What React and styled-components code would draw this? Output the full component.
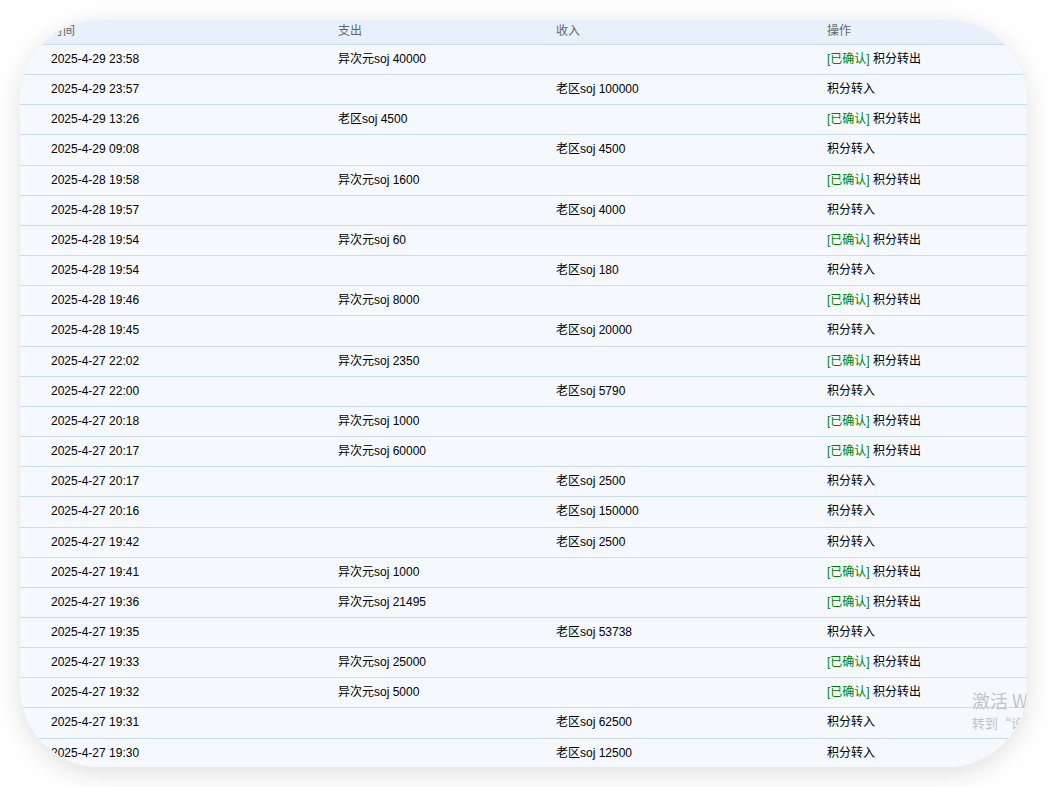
import React from 'react';
import styled, { createGlobalStyle } from 'styled-components';

const GlobalStyle = createGlobalStyle`
   html, body {
      margin: 0;
      padding: 0;
      background: #ffffff;
   }
   body {
      font-family: 'Liberation Sans', Arial, 'Noto Sans CJK SC', sans-serif;
      font-size: 12px;
      color: #000;
   }
`;

const Page = styled.div`
   padding: 20px;
   width: 1007px;
`;

const Card = styled.div`
   position: relative;
   width: 1007px;
   height: 747px;
   border-radius: 80px;
   overflow: hidden;
   background: #f5f9fe;
   box-shadow: 0 6px 28px rgba(0, 0, 0, 0.13);
`;

const Row = styled.div`
   display: grid;
   grid-template-columns: 287px 218px 271px 1fr;
   box-sizing: border-box;
   height: ${(p) => (p.$head ? '25px' : '30.16px')};
   padding: ${(p) => (p.$head ? '1px' : '4px')} 0 0 31px;
   line-height: 20px;
   border-bottom: 1px solid #c9dbee;
   background: ${(p) => (p.$head ? '#e7f0fb' : '#f5f9fe')};
   color: ${(p) => (p.$head ? '#666' : '#000')};
   white-space: nowrap;
`;

const Cell = styled.div`
   overflow: visible;
`;

const Confirmed = styled.span`
   color: #008000;
`;

const Watermark = styled.div`
   position: absolute;
   left: 952px;
   top: 668px;
   color: #c4c4c4;
   font-family: 'Noto Sans CJK SC', sans-serif;
   white-space: nowrap;
   pointer-events: none;
`;

const WmTitle = styled.div`
   font-size: 18px;
   line-height: 24px;
`;

const WmSub = styled.div`
   margin-top: 2px;
   font-size: 13px;
   line-height: 18px;
`;

const records = [
   ['2025-4-29 23:58', '异次元soj 40000', ''],
   ['2025-4-29 23:57', '', '老区soj 100000'],
   ['2025-4-29 13:26', '老区soj 4500', ''],
   ['2025-4-29 09:08', '', '老区soj 4500'],
   ['2025-4-28 19:58', '异次元soj 1600', ''],
   ['2025-4-28 19:57', '', '老区soj 4000'],
   ['2025-4-28 19:54', '异次元soj 60', ''],
   ['2025-4-28 19:54', '', '老区soj 180'],
   ['2025-4-28 19:46', '异次元soj 8000', ''],
   ['2025-4-28 19:45', '', '老区soj 20000'],
   ['2025-4-27 22:02', '异次元soj 2350', ''],
   ['2025-4-27 22:00', '', '老区soj 5790'],
   ['2025-4-27 20:18', '异次元soj 1000', ''],
   ['2025-4-27 20:17', '异次元soj 60000', ''],
   ['2025-4-27 20:17', '', '老区soj 2500'],
   ['2025-4-27 20:16', '', '老区soj 150000'],
   ['2025-4-27 19:42', '', '老区soj 2500'],
   ['2025-4-27 19:41', '异次元soj 1000', ''],
   ['2025-4-27 19:36', '异次元soj 21495', ''],
   ['2025-4-27 19:35', '', '老区soj 53738'],
   ['2025-4-27 19:33', '异次元soj 25000', ''],
   ['2025-4-27 19:32', '异次元soj 5000', ''],
   ['2025-4-27 19:31', '', '老区soj 62500'],
   ['2025-4-27 19:30', '', '老区soj 12500'],
];

const App = () => {
   return (
      <Page>
         <GlobalStyle />
         <Card>
            <Row $head>
               <Cell>时间</Cell>
               <Cell>支出</Cell>
               <Cell>收入</Cell>
               <Cell>操作</Cell>
            </Row>
            {records.map(([time, out, income], i) => (
               <Row key={i}>
                  <Cell>{time}</Cell>
                  <Cell>{out}</Cell>
                  <Cell>{income}</Cell>
                  <Cell>
                     {out ? (
                        <>
                           <Confirmed>[已确认]</Confirmed> 积分转出
                        </>
                     ) : (
                        '积分转入'
                     )}
                  </Cell>
               </Row>
            ))}
            <Watermark>
               <WmTitle>激活 Windows</WmTitle>
               <WmSub>转到“设置”以激活 Windows。</WmSub>
            </Watermark>
         </Card>
      </Page>
   );
};

export default App;
